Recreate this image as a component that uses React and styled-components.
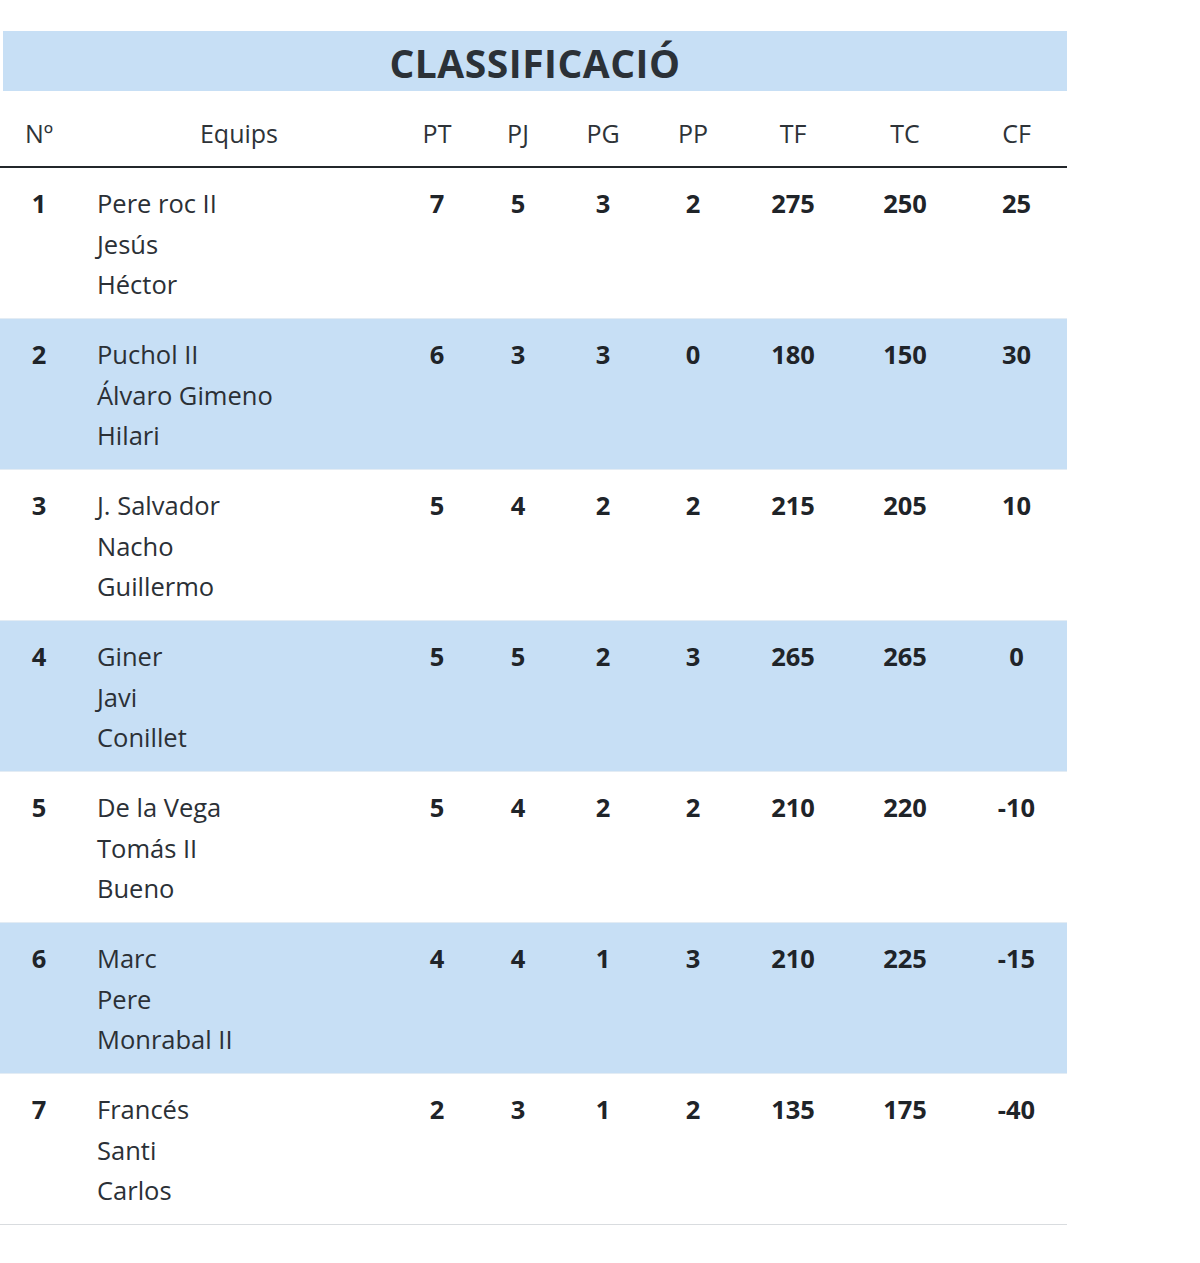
import React from "react";
import styled, { createGlobalStyle } from "styled-components";

const GlobalStyle = createGlobalStyle`
  body {
    margin: 0;
    background: #ffffff;
    font-family: "Open Sans", "Noto Sans", sans-serif;
    color: #212529;
  }
`;

const blue = "#c7dff5";

const Wrapper = styled.div`
  width: 1067px;
  padding-top: 31px;
`;

const Title = styled.h2`
  margin: 0 0 0 3px;
  height: 60px;
  background: ${blue};
  display: flex;
  align-items: center;
  justify-content: center;
  font-size: 39px;
  font-weight: 700;
  color: #2b3137;
  letter-spacing: 0.5px;
  padding-top: 2px;
  box-sizing: border-box;
`;

const Table = styled.table`
  width: 1067px;
  border-collapse: collapse;
  table-layout: fixed;
  font-size: 25.5px;
`;

const HeadCell = styled.th`
  font-weight: 400;
  color: #2e3338;
  text-align: center;
  height: 76px;
  padding: 8px 0 0;
  box-sizing: border-box;
  font-size: 25px;
  border-bottom: 2px solid #23272b;
`;

const Row = styled.tr`
  background: ${(p) => (p.$striped ? blue : "#ffffff")};
  border-bottom: 1px solid ${(p) => (p.$last ? "#d9dcdf" : "#e3ecf4")};
`;

const Cell = styled.td`
  vertical-align: top;
  text-align: ${(p) => (p.$left ? "left" : "center")};
  font-weight: ${(p) => (p.$bold ? 700 : 400)};
  padding: ${(p) => (p.$left ? "15px 0 13.5px 19px" : "15px 0 13.5px")};
  line-height: 40.5px;
  color: ${(p) => (p.$bold ? "#1f2429" : "#2b3036")};
`;

const Name = styled.div`
  white-space: nowrap;
`;

const widths = [78, 322, 74, 88, 82, 98, 102, 122, 101];
const heads = ["Nº", "Equips", "PT", "PJ", "PG", "PP", "TF", "TC", "CF"];

const teams = [
  { pos: 1, names: ["Pere roc II", "Jesús", "Héctor"], stats: [7, 5, 3, 2, 275, 250, 25] },
  { pos: 2, names: ["Puchol II", "Álvaro Gimeno", "Hilari"], stats: [6, 3, 3, 0, 180, 150, 30] },
  { pos: 3, names: ["J. Salvador", "Nacho", "Guillermo"], stats: [5, 4, 2, 2, 215, 205, 10] },
  { pos: 4, names: ["Giner", "Javi", "Conillet"], stats: [5, 5, 2, 3, 265, 265, 0] },
  { pos: 5, names: ["De la Vega", "Tomás II", "Bueno"], stats: [5, 4, 2, 2, 210, 220, -10] },
  { pos: 6, names: ["Marc", "Pere", "Monrabal II"], stats: [4, 4, 1, 3, 210, 225, -15] },
  { pos: 7, names: ["Francés", "Santi", "Carlos"], stats: [2, 3, 1, 2, 135, 175, -40] },
];

export default function App() {
  return (
    <>
      <GlobalStyle />
      <Wrapper>
        <Title>CLASSIFICACIÓ</Title>
        <Table>
          <colgroup>
            {widths.map((w, i) => (
              <col key={i} style={{ width: w }} />
            ))}
          </colgroup>
          <thead>
            <tr>
              {heads.map((h) => (
                <HeadCell key={h}>{h}</HeadCell>
              ))}
            </tr>
          </thead>
          <tbody>
            {teams.map((t, i) => (
              <Row key={t.pos} $striped={i % 2 === 1} $last={i === teams.length - 1}>
                <Cell $bold>{t.pos}</Cell>
                <Cell $left>
                  {t.names.map((n) => (
                    <Name key={n}>{n}</Name>
                  ))}
                </Cell>
                {t.stats.map((s, j) => (
                  <Cell key={j} $bold>
                    {s}
                  </Cell>
                ))}
              </Row>
            ))}
          </tbody>
        </Table>
      </Wrapper>
    </>
  );
}
